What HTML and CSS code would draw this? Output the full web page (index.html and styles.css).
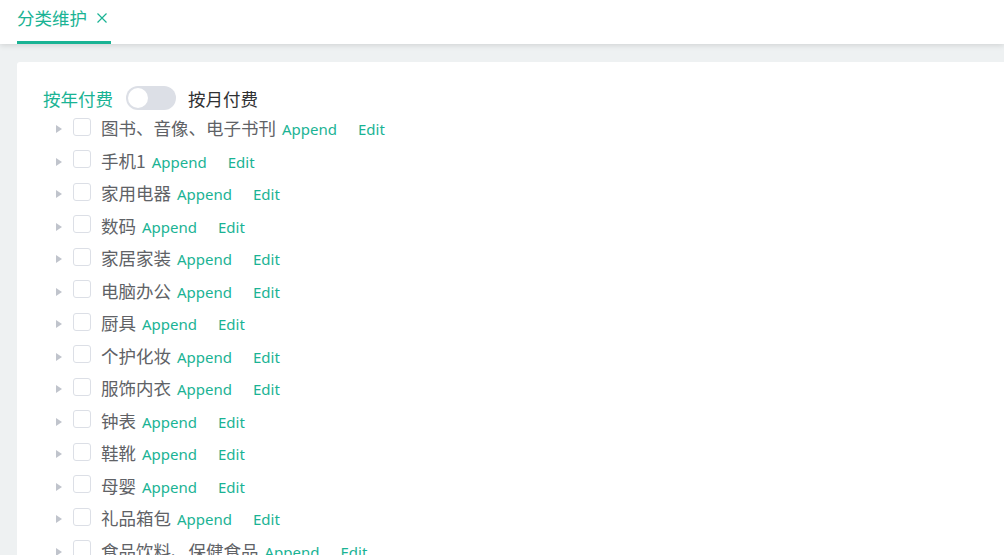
FILE: index.html
```html
<!DOCTYPE html>
<html lang="zh">
<head>
<meta charset="utf-8">
<link rel="stylesheet" href="styles.css">
</head>
<body>
<header class="tabs">
  <div class="tab active"><span class="tab-label">分类维护</span><svg class="tab-close" width="10" height="10" viewBox="0 0 10 10"><path d="M0.5 0.5L9.5 9.5M9.5 0.5L0.5 9.5" stroke="#1ab394" stroke-width="1.2" fill="none"/></svg></div>
</header>
<main class="page">
  <section class="card">
    <div class="switch-row">
      <span class="sw-left">按年付费</span>
      <span class="switch"><span class="knob"></span></span>
      <span class="sw-right">按月付费</span>
    </div>
    <ul class="tree">
      <li class="node"><span class="caret"></span><span class="check"></span><span class="label">图书、音像、电子书刊</span><a class="act">Append</a><a class="act edit">Edit</a></li>
      <li class="node"><span class="caret"></span><span class="check"></span><span class="label">手机1</span><a class="act">Append</a><a class="act edit">Edit</a></li>
      <li class="node"><span class="caret"></span><span class="check"></span><span class="label">家用电器</span><a class="act">Append</a><a class="act edit">Edit</a></li>
      <li class="node"><span class="caret"></span><span class="check"></span><span class="label">数码</span><a class="act">Append</a><a class="act edit">Edit</a></li>
      <li class="node"><span class="caret"></span><span class="check"></span><span class="label">家居家装</span><a class="act">Append</a><a class="act edit">Edit</a></li>
      <li class="node"><span class="caret"></span><span class="check"></span><span class="label">电脑办公</span><a class="act">Append</a><a class="act edit">Edit</a></li>
      <li class="node"><span class="caret"></span><span class="check"></span><span class="label">厨具</span><a class="act">Append</a><a class="act edit">Edit</a></li>
      <li class="node"><span class="caret"></span><span class="check"></span><span class="label">个护化妆</span><a class="act">Append</a><a class="act edit">Edit</a></li>
      <li class="node"><span class="caret"></span><span class="check"></span><span class="label">服饰内衣</span><a class="act">Append</a><a class="act edit">Edit</a></li>
      <li class="node"><span class="caret"></span><span class="check"></span><span class="label">钟表</span><a class="act">Append</a><a class="act edit">Edit</a></li>
      <li class="node"><span class="caret"></span><span class="check"></span><span class="label">鞋靴</span><a class="act">Append</a><a class="act edit">Edit</a></li>
      <li class="node"><span class="caret"></span><span class="check"></span><span class="label">母婴</span><a class="act">Append</a><a class="act edit">Edit</a></li>
      <li class="node"><span class="caret"></span><span class="check"></span><span class="label">礼品箱包</span><a class="act">Append</a><a class="act edit">Edit</a></li>
      <li class="node"><span class="caret"></span><span class="check"></span><span class="label">食品饮料、保健食品</span><a class="act">Append</a><a class="act edit">Edit</a></li>
    </ul>
  </section>
</main>
</body>
</html>
```
FILE: styles.css
```css
html, body {
  margin: 0;
  padding: 0;
  height: 100%;
  overflow: hidden;
}
body {
  background: #eef1f2;
  font-family: "Noto Sans", "Noto Sans CJK SC", sans-serif;
  color: #606266;
}
.tabs {
  height: 44px;
  background: #fff;
  box-shadow: 0 1px 6px rgba(0, 0, 0, 0.14);
  display: flex;
  padding-left: 17px;
  position: relative;
  z-index: 1;
}
.tab {
  display: flex;
  align-items: center;
  height: 41px;
  border-bottom: 3px solid #1ab394;
  color: #1ab394;
  padding-right: 4px;
  gap: 10px;
}
.tab-label {
  font-family: "Noto Sans CJK SC", sans-serif;
  font-size: 17.5px;
  line-height: 24px;
  margin-top: -5px;
}
.tab-close {
  margin-top: -5px;
}
.page {
  padding: 18px 0 0 17px;
}
.card {
  background: #fff;
  border-radius: 3px 0 0 0;
  padding: 24px 0 0 26px;
  height: 600px;
}
.switch-row {
  display: flex;
  align-items: center;
  height: 26px;
  font-family: "Noto Sans CJK SC", sans-serif;
  font-size: 17.5px;
  margin-top: -1px;
  margin-bottom: 1px;
}
.sw-left {
  color: #1ab394;
}
.sw-right {
  color: #303133;
}
.switch {
  width: 50px;
  height: 24px;
  border-radius: 12px;
  background: #dcdfe6;
  margin: 0 12px 0 13px;
  display: flex;
  align-items: center;
  padding-left: 2px;
  box-sizing: border-box;
}
.knob {
  width: 20px;
  height: 20px;
  border-radius: 50%;
  background: #fff;
}
.tree {
  list-style: none;
  margin: 0;
  padding: 0;
}
.node {
  height: 32.5px;
  display: flex;
  align-items: center;
}
.caret {
  width: 0;
  height: 0;
  border-left: 6px solid #c0c4cc;
  border-top: 4px solid transparent;
  border-bottom: 4px solid transparent;
  margin-left: 13px;
  margin-right: 11px;
  margin-top: 2px;
}
.check {
  width: 18px;
  height: 18px;
  box-sizing: border-box;
  border: 1px solid #dcdfe6;
  border-radius: 3px;
  background: #fff;
  margin-right: 10px;
  margin-top: -3px;
}
.label {
  font-family: "Noto Sans CJK SC", sans-serif;
  font-size: 17.5px;
  color: #606266;
  line-height: 24px;
  margin-top: 0;
}
.act {
  font-family: "Noto Sans", sans-serif;
  font-size: 15px;
  color: #1ab394;
  margin-left: 6px;
  margin-top: 2px;
}
.act.edit {
  margin-left: 21px;
}
```
